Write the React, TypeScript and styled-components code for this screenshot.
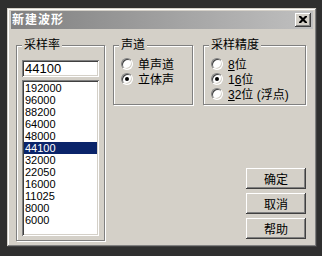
import * as React from 'react'
import styled, { createGlobalStyle } from 'styled-components'

const GlobalStyle = createGlobalStyle`
  html, body {
    margin: 0;
    padding: 0;
    background: #2f2f2f;
  }
  body {
    width: 322px;
    height: 256px;
    overflow: hidden;
    font-family: "Liberation Sans", "Noto Sans CJK SC", sans-serif;
    font-size: 12px;
    color: #000;
  }
`

const FACE = '#d4d0c8'

const sampleRates = [
  '192000', '96000', '88200', '64000', '48000', '44100',
  '32000', '22050', '16000', '11025', '8000', '6000'
]

// classic raised / sunken bevels
const raised = `
  box-shadow: inset -1px -1px #404040, inset 1px 1px #fff,
    inset -2px -2px #808080, inset 2px 2px ${FACE};
`
const sunken = `
  box-shadow: inset 1px 1px #808080, inset -1px -1px #fff,
    inset 2px 2px #404040, inset -2px -2px ${FACE};
`

const Window = styled.div`
  box-sizing: border-box;
  margin: 8px 0 0 7px;
  width: 310px;
  height: 239px;
  padding: 3px 4px 4px 4px;
  background: ${FACE};
  box-shadow: inset -1px -1px #404040, inset 1px 1px ${FACE},
    inset -2px -2px #808080, inset 2px 2px #fff;
  display: flex;
  flex-direction: column;
`
const TitleBar = styled.div`
  height: 18px;
  flex: none;
  display: flex;
  align-items: center;
  justify-content: space-between;
  padding: 0 2px 0 1px;
  background: linear-gradient(to right, #808080, #c0c0c0);
`
const Title = styled.span`
  color: #fff;
  font-weight: bold;
  font-size: 12px;
  letter-spacing: 1px;
  line-height: 18px;
`
const CloseButton = styled.div`
  width: 16px;
  height: 14px;
  display: flex;
  align-items: center;
  justify-content: center;
  background: ${FACE};
  ${raised}
  svg {
    display: block;
    margin-top: -1px;
  }
`
const Body = styled.div`
  flex: 1;
  display: flex;
  gap: 7px;
  padding: 16px 7px 7px 5px;
`
const GroupBox = styled.div<{ $w: number }>`
  position: relative;
  box-sizing: border-box;
  width: ${p => p.$w}px;
  border: 1px solid #808080;
  box-shadow: inset 1px 1px #fff, 1px 1px #fff;
  display: flex;
  flex-direction: column;
  padding: 10px 6px 4px 7px;
`
const Caption = styled.span`
  position: absolute;
  top: -9px;
  left: 5px;
  padding: 0 2px;
  background: ${FACE};
  font-family: "Noto Sans CJK SC", sans-serif;
  font-size: 12px;
  line-height: 14px;
`
const RateGroup = styled(GroupBox)`
  padding: 14px 5px 4px 5px;
  gap: 3px;
`
const Edit = styled.div`
  height: 17px;
  background: #fff;
  ${sunken}
  padding: 0 3px;
  font-size: 13px;
  line-height: 17px;
`
const ListBox = styled.div`
  height: 156px;
  box-sizing: border-box;
  background: #fff;
  ${sunken}
  padding: 2px;
`
const ListItem = styled.div<{ $selected?: boolean }>`
  height: 12px;
  line-height: 12px;
  font-size: 11px;
  padding-left: 1px;
  background: ${p => (p.$selected ? '#0a246a' : 'transparent')};
  color: ${p => (p.$selected ? '#fff' : '#000')};
`
const RightColumn = styled.div`
  flex: 1;
  display: flex;
  flex-direction: column;
  justify-content: space-between;
`
const GroupRow = styled.div`
  display: flex;
  gap: 10px;
  margin-left: 1px;
  height: 60px;
`
const RadioRow = styled.label`
  display: flex;
  align-items: center;
  gap: 5px;
  height: 15px;
  white-space: nowrap;
  font-family: "Liberation Sans", "Noto Sans CJK SC", sans-serif;
  font-size: 12px;
  u {
    text-underline-offset: 1px;
  }
`
const RadioDot = styled.span<{ $checked?: boolean }>`
  position: relative;
  box-sizing: border-box;
  width: 12px;
  height: 12px;
  border-radius: 50%;
  background: #fff;
  border: 1px solid;
  border-color: #808080 #fff #fff #808080;
  box-shadow: inset 1px 1px #404040, inset -1px -1px ${FACE};
  &::after {
    content: '';
    display: ${p => (p.$checked ? 'block' : 'none')};
    position: absolute;
    left: 3px;
    top: 3px;
    width: 4px;
    height: 4px;
    border-radius: 50%;
    background: #000;
  }
`
const ButtonStack = styled.div`
  align-self: flex-end;
  display: flex;
  flex-direction: column;
  gap: 4px;
  margin-bottom: 2px;
`
const PushButton = styled.div`
  width: 60px;
  height: 21px;
  display: flex;
  align-items: center;
  justify-content: center;
  background: ${FACE};
  ${raised}
  font-family: "Noto Sans CJK SC", sans-serif;
  font-size: 12px;
`

const Radio = ({ checked, children }: { checked?: boolean; children: React.ReactNode }) => (
  <RadioRow>
    <RadioDot $checked={checked} />
    <span>{children}</span>
  </RadioRow>
)

export default function App() {
  return (
    <>
      <GlobalStyle />
      <Window>
        <TitleBar>
          <Title>新建波形</Title>
          <CloseButton>
            <svg width="8" height="7" viewBox="0 0 8 7">
              <path d="M0 0h2l2 2 2-2h2v1l-2.5 2.5L8 6v1H6L4 5 2 7H0V6l2.5-2.5L0 1z" fill="#000" />
            </svg>
          </CloseButton>
        </TitleBar>
        <Body>
          <RateGroup $w={90}>
            <Caption>采样率</Caption>
            <Edit>44100</Edit>
            <ListBox>
              {sampleRates.map(r => (
                <ListItem key={r} $selected={r === '44100'}>{r}</ListItem>
              ))}
            </ListBox>
          </RateGroup>
          <RightColumn>
            <GroupRow>
              <GroupBox $w={80}>
                <Caption>声道</Caption>
                <Radio>单声道</Radio>
                <Radio checked>立体声</Radio>
              </GroupBox>
              <GroupBox $w={103}>
                <Caption>采样精度</Caption>
                <Radio><u>8</u>位</Radio>
                <Radio checked>1<u>6</u>位</Radio>
                <Radio><u>3</u>2位 (浮点)</Radio>
              </GroupBox>
            </GroupRow>
            <ButtonStack>
              <PushButton>确定</PushButton>
              <PushButton>取消</PushButton>
              <PushButton>帮助</PushButton>
            </ButtonStack>
          </RightColumn>
        </Body>
      </Window>
    </>
  )
}
